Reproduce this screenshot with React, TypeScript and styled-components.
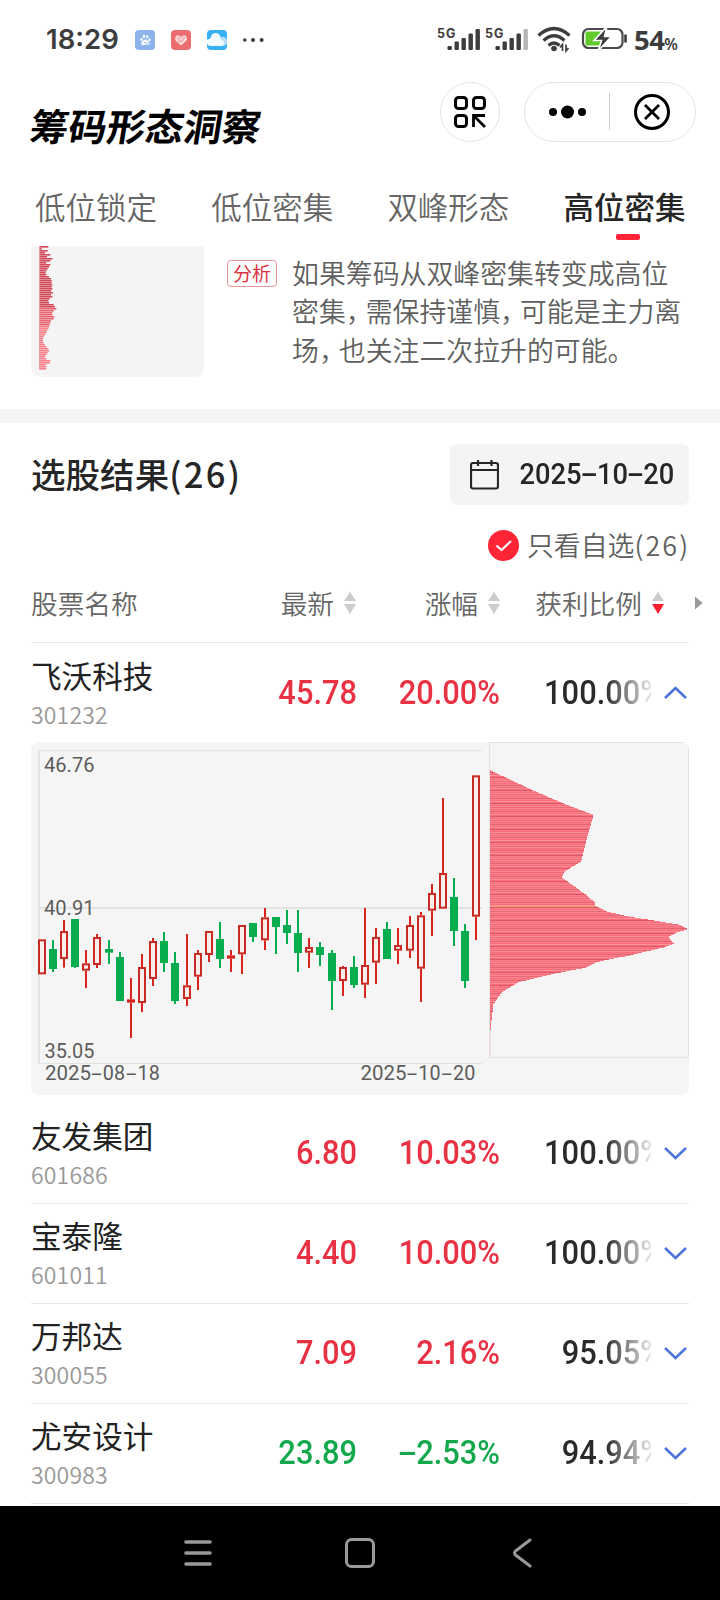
import React from 'react';
import styled, { createGlobalStyle, css } from 'styled-components';

const GlobalStyle = createGlobalStyle`
  * { box-sizing: border-box; }
  html, body { margin: 0; padding: 0; background: #fff; }
  body { font-family: "Noto Sans CJK SC", sans-serif; color: #262626; }
  svg { display: block; flex: none; }
`;

const Screen = styled.div`
  width: 720px;
  height: 1600px;
  display: flex;
  flex-direction: column;
  background: #fff;
  overflow: hidden;
  white-space: nowrap;
`;

/* ---------- status bar ---------- */
const StatusBar = styled.header`
  height: 78px;
  padding: 1px 40px 0 46px;
  display: flex;
  align-items: center;
  justify-content: space-between;
  color: #3d3d3d;
`;
const StatusGroup = styled.div`
  display: flex;
  align-items: center;
`;
const Clock = styled.span`
  width: 89px;
  font: 600 27.5px/1 Inter, sans-serif;
`;
const AppBadge = styled.span<{ $bg: string }>`
  width: 20px;
  height: 20px;
  margin-right: 16px;
  border-radius: 4px;
  background: ${(p) => p.$bg};
  overflow: hidden;
`;
const Battery = styled.span`
  width: 46px;
  margin-left: 6px;
  font: 700 27.5px/1 "Noto Sans", sans-serif;
  letter-spacing: -0.6px;
  small { font-size: 15.5px; font-weight: 600; letter-spacing: 0; }
`;

/* ---------- header ---------- */
const Header = styled.div`
  height: 68px;
  padding: 0 24px 0 31px;
  display: flex;
  align-items: flex-start;
`;
const Brand = styled.h1`
  flex: 1;
  margin: 24px 0 0;
  font-size: 38.4px;
  line-height: 44px;
  font-weight: 700;
  color: #000;
  span { display: inline-block; transform: skewX(-9deg) scaleY(0.98); }
`;
const RoundButton = styled.button`
  width: 60px;
  height: 60px;
  margin: 4px 24px 0 0;
  padding: 0;
  border: 1px solid #e4e4e4;
  border-radius: 50%;
  background: #fff;
  display: flex;
  align-items: center;
  justify-content: center;
`;
const Capsule = styled.div`
  width: 172px;
  height: 60px;
  margin-top: 4px;
  border: 1px solid #e4e4e4;
  border-radius: 30px;
  display: flex;
  align-items: center;
`;
const CapsuleHalf = styled.div`
  flex: 1;
  display: flex;
  justify-content: center;
  & + & { position: relative; }
  & + &::before {
    content: '';
    position: absolute;
    left: -1px;
    top: 0;
    width: 1px;
    height: 37px;
    background: #ccc;
  }
`;

/* ---------- tabs ---------- */
const Tabs = styled.nav`
  height: 100px;
  padding: 38px 0 0 35px;
  display: flex;
`;
const Tab = styled.div<{ $active?: boolean }>`
  flex: none;
  width: 176.2px;
  font-size: 30.5px;
  line-height: 44px;
  color: ${(p) => (p.$active ? '#262626' : '#666')};
  font-weight: ${(p) => (p.$active ? 500 : 350)};
  ${(p) => p.$active && css`
    &::after {
      content: '';
      display: block;
      width: 24px;
      height: 6px;
      margin: 6px 0 0 52px;
      border-radius: 2px;
      background: #ff2436;
    }
  `}
`;

/* ---------- analysis ---------- */
const Analysis = styled.section`
  height: 163px;
  padding-left: 31px;
  display: flex;
  align-items: flex-start;
`;
const SampleCard = styled.div`
  width: 173px;
  height: 131px;
  padding-left: 8px;
  border-radius: 0 0 9px 9px;
  background: #f4f4f4;
`;
const Tag = styled.span`
  width: 50px;
  height: 27px;
  margin: 14px 15px 0 23px;
  border: 1px solid #e3939a;
  border-radius: 4px;
  font-size: 19px;
  line-height: 23px;
  text-align: center;
  color: #d93343;
`;
const Description = styled.p`
  margin: 8px 0 0;
  font-size: 26.88px;
  line-height: 38.4px;
  font-weight: 350;
  color: #5f5f5f;
`;
const Comma = styled.span`
  letter-spacing: -7px;
`;
const Band = styled.div`
  height: 14px;
  background: #f4f4f4;
`;

/* ---------- results ---------- */
const Results = styled.main`
  flex: 1;
  padding: 21px 31px 0;
  overflow: hidden;
`;
const ResultHead = styled.div`
  display: flex;
  align-items: center;
  justify-content: space-between;
  height: 61px;
`;
const ResultTitle = styled.h2`
  margin: 0 0 4px;
  font-size: 34.56px;
  font-weight: 500;
  line-height: 50px;
  span { letter-spacing: 2.3px; }
`;
const DateBox = styled.div`
  width: 239px;
  height: 61px;
  padding: 0 15px 0 20px;
  border-radius: 7px;
  background: #f4f4f4;
  display: flex;
  align-items: center;
  justify-content: space-between;
`;
const DateText = styled.span`
  margin-top: 1px;
  font: 500 29.5px/1 Roboto, sans-serif;
  transform: scaleX(0.925);
  transform-origin: right;
`;
const Dash = styled.span`
  display: inline-block;
  width: 16.6px;
  text-align: center;
  transform: scaleX(1.9);
`;
const Filter = styled.div`
  height: 60px;
  margin-top: 9px;
  display: flex;
  align-items: center;
  justify-content: flex-end;
  gap: 8px;
  font-size: 26.88px;
  font-weight: 350;
  color: #5f5f5f;
  svg { margin-top: 2px; }
  span span { letter-spacing: 2.1px; margin-right: -1.2px; }
`;
const TableHead = styled.div`
  height: 69px;
  padding-bottom: 12px;
  border-bottom: 1px solid #e6e6e6;
  display: grid;
  grid-template-columns: 195px 130px 144px 164px 1fr;
  align-items: center;
  font-size: 26.7px;
  font-weight: 350;
  color: #666;
  svg { margin-top: 2px; }
`;
const HeadCell = styled.div<{ $first?: boolean }>`
  display: flex;
  align-items: center;
  justify-content: ${(p) => (p.$first ? 'flex-start' : 'flex-end')};
  gap: 10px;
`;
const ScrollHint = styled.div`
  margin-left: 31px;
`;
const StockRow = styled.div<{ $open?: boolean }>`
  height: ${(p) => (p.$open ? 99 : 100)}px;
  padding-top: ${(p) => (p.$open ? 3 : 0)}px;
  border-bottom: 1px solid ${(p) => (p.$open ? 'transparent' : '#e6e6e6')};
  display: grid;
  grid-template-columns: 160px 166px 143px 151px 1fr;
  align-items: center;
`;
const StockName = styled.div`
  font-size: 30.6px;
  line-height: 40px;
  font-weight: 400;
  color: #222;
`;
const StockCode = styled.div`
  font-size: 23.04px;
  line-height: 38px;
  font-weight: 350;
  letter-spacing: 0.15px;
  color: #999;
`;
const Figure = styled.div<{ $color: string }>`
  margin-bottom: 2px;
  font: 500 33.5px/40px Roboto, sans-serif;
  text-align: right;
  color: ${(p) => p.$color};
  transform: scaleX(0.92);
  transform-origin: right;
  ${Dash} { width: 18.8px; }
`;
const FadedFigure = styled(Figure)`
  overflow: hidden;
  display: flex;
  justify-content: flex-end;
  mask-image: linear-gradient(to right, #000 calc(100% - 50px), rgba(0, 0, 0, 0.1));
  span { margin-right: -13px; }
`;
const ChevronCell = styled.div<{ $open?: boolean }>`
  display: flex;
  justify-content: flex-end;
  padding: 0 2px ${(p) => (p.$open ? 2 : 0)}px 0;
`;
const ChartCard = styled.div`
  height: 353px;
  margin-bottom: 9px;
  border-radius: 8px;
  background: #f5f5f5;
  overflow: hidden;
`;

/* ---------- navigation bar ---------- */
const NavBar = styled.footer`
  height: 94px;
  background: #000;
  display: flex;
  align-items: center;
  justify-content: center;
  gap: 132px;
`;

type Candle = ['r' | 'g' | 'f', number, number, number, number];

/* kind, high, body top, body bottom, low — in thirds of a pixel from y = 735 */
const candles: Candle[] = [
  ['r', 613, 613, 718, 718], ['g', 615, 642, 702, 711], ['r', 555, 588, 672, 698], ['g', 552, 552, 696, 699],
  ['r', 645, 685, 707, 759], ['r', 597, 606, 690, 699], ['g', 615, 642, 653, 687], ['g', 651, 666, 798, 798],
  ['f', 729, 793, 803, 909], ['r', 657, 696, 804, 831], ['r', 609, 618, 732, 753], ['g', 591, 618, 684, 711],
  ['g', 651, 684, 798, 807], ['r', 597, 751, 792, 813], ['r', 645, 654, 725, 765], ['r', 588, 588, 660, 681],
  ['g', 561, 612, 672, 699], ['f', 645, 661, 671, 711], ['r', 570, 570, 658, 717], ['g', 564, 564, 606, 621],
  ['r', 519, 547, 616, 645], ['g', 546, 546, 576, 657], ['g', 525, 570, 594, 627], ['g', 525, 594, 654, 711],
  ['r', 609, 636, 653, 699], ['g', 621, 636, 660, 693], ['g', 645, 654, 738, 825], ['r', 693, 696, 738, 783],
  ['g', 663, 696, 750, 759], ['r', 519, 690, 749, 789], ['r', 579, 606, 683, 747], ['g', 561, 582, 672, 672],
  ['r', 579, 630, 647, 687], ['r', 543, 570, 647, 669], ['r', 531, 541, 701, 801], ['r', 447, 474, 527, 603],
  ['r', 189, 414, 521, 521], ['g', 429, 486, 588, 633], ['g', 567, 588, 738, 759], ['r', 121, 121, 545, 615],
];

/* chip distribution outline: width, row — in thirds of a pixel */
const profile: [number, number][] = [
  [2, 330], [40, 348], [125, 388], [175, 410], [240, 437], [310, 463], [291, 530], [272, 604], [225, 632], [214, 650],
  [250, 676], [290, 705], [314, 726], [314, 735], [350, 753], [420, 769], [480, 778], [540, 788], [570, 793],
  [594, 806], [560, 816], [534, 830], [552, 849], [520, 861], [455, 876], [415, 886], [370, 894], [320, 905],
  [285, 922], [190, 940], [85, 965], [35, 995], [10, 1030], [4, 1075], [1, 1110],
];

const profileWidth = (y: number) => {
  for (let i = 1; i < profile.length; i++) {
    const [w0, y0] = profile[i - 1];
    const [w1, y1] = profile[i];
    if (y <= y1) return w0 + ((w1 - w0) * (y - y0)) / (y1 - y0);
  }
  return 0;
};

const shades = ['#d9596a', '#fd7d88', '#fa6c79', '#f98c95', '#e96a76', '#ff8690', '#fd6c79', '#f47d87', '#de6471', '#ff7f8a', '#fb6b79', '#f9949b', '#ff6c79'];

const priceLabel = { fontFamily: 'Roboto', fontSize: 21, fill: '#5c5c5c' } as const;

function DateLabel({ x, parts }: { x: number; parts: string[] }) {
  const offsets = [0, 57.8, 92.6];
  return (
    <g {...priceLabel}>
      {parts.map((p, i) => (
        <text key={i} x={x + offsets[i]} y={337.5} textLength={i === 0 ? 46 : 22.2} lengthAdjust="spacingAndGlyphs">{p}</text>
      ))}
      {[46.3, 81].map((o) => (
        <text key={o} transform={`translate(${x + o} 337.5) scale(1.8 1)`} x={0} y={0}>-</text>
      ))}
    </g>
  );
}

function KLineChart() {
  const rows: React.ReactNode[] = [];
  for (let y = 110; y < 370; y++) {
    const w = profileWidth(y * 3) / 3;
    const fill = y === 246 ? '#f2a06a' : shades[y % shades.length];
    if (w > 0) rows.push(<rect key={y} x={459} y={y - 82} width={Math.round(w * 2) / 2} height={1} fill={fill} />);
  }
  return (
    <svg width="658" height="353">
      <g stroke="#e3e3e3" fill="none">
        <path d="M7 8.5H451M7 321.5H451" />
        <path d="M7 166H451M8 8V321" strokeWidth="2" />
        <path d="M458.5 .5H657.5V315.5H458.5Z" />
      </g>
      <g {...priceLabel}>
        <text x="13" y="29.5" textLength="50.5" lengthAdjust="spacingAndGlyphs">46.76</text>
        <text x="13" y="173" textLength="50.5" lengthAdjust="spacingAndGlyphs">40.91</text>
        <text x="13.5" y="316" textLength="50" lengthAdjust="spacingAndGlyphs">35.05</text>
      </g>
      {candles.map(([kind, h, t, b, l], i) => {
        const cx = Math.round(10.6 + i * 11.15);
        const [hi, top, bot, lo] = [h, t, b, l].map((v) => v / 3 - 7);
        const color = kind === 'g' ? '#06ad4e' : '#d8241c';
        return (
          <g key={i} fill={color}>
            <rect x={cx - 1} y={hi} width={2} height={top - hi} />
            <rect x={cx - 1} y={bot} width={2} height={lo - bot} />
            {kind === 'r' ? (
              <rect x={cx - 3} y={top + 1} width={6} height={Math.max(bot - top - 2, 1)} fill="#fbeeed" stroke="#c92a22" strokeWidth={2} />
            ) : (
              <rect x={cx - 4} y={top} width={8} height={bot - top} />
            )}
          </g>
        );
      })}
      <g shapeRendering="crispEdges">{rows}</g>
      <path d="M459 288V315" stroke="#f3cdd0" strokeWidth="1" />
      <DateLabel x={14} parts={['2025', '08', '18']} />
      <DateLabel x={329.5} parts={['2025', '10', '20']} />
    </svg>
  );
}

const sampleBars = [28, 8, 26, 18, 34, 24, 40, 34, 22, 34, 30, 26, 22, 20, 22, 30, 36, 38, 38, 40, 38, 40, 36, 42, 36, 40, 32, 28, 30, 44, 48, 52, 44, 40, 40, 46, 44, 36, 34, 32, 30, 28, 24, 22, 18, 14, 12, 12, 14, 18, 22, 28, 30, 26, 22, 18, 22, 34, 32, 20, 22, 22];

function SampleBars() {
  return (
    <svg width="60" height="131">
      {sampleBars.map((w, i) => (
        <rect key={i} x="0" y={i * 2} width={w / 3} height="1.6" fill={i < 31 ? '#d2495a' : i < 40 ? '#ea6573' : '#f77f8a'} />
      ))}
      <path d="M.5 0V123" stroke="#f29aa3" strokeWidth="1" />
    </svg>
  );
}

function SortArrows({ active }: { active?: boolean }) {
  return (
    <svg width="12" height="24" viewBox="0 0 12 24">
      <path d="M6 .8L12 10H0Z" fill="#ccc" />
      <path d="M6 23L12 13H0Z" fill={active ? '#f5222f' : '#ccc'} />
    </svg>
  );
}

function Chevron({ up }: { up?: boolean }) {
  return (
    <svg width="23" height="13" viewBox="0 0 23 13" fill="none" stroke="#4a73dc" strokeWidth="2.5">
      <path d={up ? 'M1 12L11.5 2L22 12' : 'M1 1L11.5 11L22 1'} />
    </svg>
  );
}

function Signal({ weak }: { weak?: boolean }) {
  return (
    <svg width="48" height="28" viewBox="0 -1 48 28">
      <text x="0" y="10.5" fontFamily="Inter" fontWeight="700" fontSize="12.5" textLength="18.5" fill="#3d3d3d">5G</text>
      {[4, 8.5, 12, 16.5, 21].map((h, i) => (
        <rect key={i} x={10.5 + i * 7} y={23 - h} width="4.4" height={h} rx="1" fill={weak && i === 4 ? '#b5b5b5' : '#3d3d3d'} />
      ))}
    </svg>
  );
}

function WifiBattery() {
  return (
    <svg width="95" height="28" viewBox="-4 0 95 28">
      <g fill="none" stroke="#3d3d3d" strokeWidth="3.2">
        <path d="M1.5 9.5Q17 -4.5 32.5 9.5" />
        <path d="M6.5 14.5Q17 5 27.5 14.5" />
        <path d="M11.5 19.5Q17 14.5 22.5 19.5" />
      </g>
      <circle cx="17" cy="22.5" r="2.8" fill="#3d3d3d" />
      <path d="M25.5 25V18.5L23 21.5M29 18.5V25L31.500 22" stroke="#3d3d3d" strokeWidth="1.7" fill="none" />
      <rect x="46" y="3" width="39.5" height="19" rx="5.5" fill="none" stroke="#4a4a4a" strokeWidth="2.2" />
      <path d="M50 5.5H66L60 13.5H66L63 19.5H50Q48.5 19.5 48.5 18V7Q48.5 5.5 50 5.5Z" fill="#62cb2c" />
      <path d="M70 .5L57 14.5H64.5L61 25L74.5 10.5H67.5Z" fill="#3d3d3d" stroke="#fff" strokeWidth="1.6" />
      <path d="M88.5 8.5V16.5" stroke="#3d3d3d" strokeWidth="2.6" />
    </svg>
  );
}

const stocks = [
  { name: '飞沃科技', code: '301232', price: '45.78', change: '20.00%', ratio: '100.00%', open: true },
  { name: '友发集团', code: '601686', price: '6.80', change: '10.03%', ratio: '100.00%' },
  { name: '宝泰隆', code: '601011', price: '4.40', change: '10.00%', ratio: '100.00%' },
  { name: '万邦达', code: '300055', price: '7.09', change: '2.16%', ratio: '95.05%' },
  { name: '尤安设计', code: '300983', price: '23.89', change: '-2.53%', ratio: '94.94%' },
];

export default function App() {
  return (
    <Screen>
      <GlobalStyle />
      <StatusBar>
        <StatusGroup>
          <Clock>18:29</Clock>
          <AppBadge $bg="#8db4ea">
            <svg width="20" height="20" viewBox="0 0 20 20" fill="#fff">
              <path d="M10.5 9.5C12 9.5 14.7 12 14.5 13.7C14.2 15.7 11.8 14.9 10.3 15C8.5 15.2 6.5 15.5 6.3 13.7C6.2 12 9 9.5 10.5 9.5Z" />
              <ellipse cx="6.5" cy="9.5" rx="1.2" ry="1.7" />
              <ellipse cx="9" cy="6.5" rx="1.2" ry="1.7" />
              <ellipse cx="12.2" cy="6.7" rx="1.2" ry="1.7" />
              <ellipse cx="14.5" cy="9.7" rx="1.2" ry="1.5" />
              <path d="M8.5 13.5L10.5 11.5M11 12.3V14H13V12.3" stroke="#8db4ea" strokeWidth=".8" fill="none" />
            </svg>
          </AppBadge>
          <AppBadge $bg="#ec6d70">
            <svg width="20" height="20" viewBox="0 0 20 20">
              <path d="M10 15.5L5 11Q3 8 5.5 5.8Q8 4.5 10 7Q12 4.5 14.5 5.8Q17 8 15 11Z" fill="#fbdedd" />
              <path d="M6 7.5L10 12L14 7.5M8 6.5L9 8.5M12 6.5L11 8.5M7 11L8.5 12" stroke="#ec6d70" fill="none" strokeWidth=".8" />
            </svg>
          </AppBadge>
          <AppBadge $bg="#37b0f5">
            <svg width="20" height="20" viewBox="0 0 20 20">
              <circle cx="15.5" cy="11.5" r="4.7" fill="#b5e0fb" />
              <path d="M0 9.5Q3 9 3.5 8Q4.5 3 9 3Q14 3.5 13.5 9.5Q17 10 17 13Q16.5 16 13.5 16H4Q1 16 0 14Z" fill="#f2fafe" />
            </svg>
          </AppBadge>
          <svg width="24" height="20" fill="#3d3d3d"><circle cx="1.8" cy="10" r="1.8" /><circle cx="10" cy="10" r="2" /><circle cx="18.6" cy="10" r="2" /></svg>
        </StatusGroup>
        <StatusGroup>
          <Signal />
          <Signal weak />
          <WifiBattery />
          <Battery>54<small>%</small></Battery>
        </StatusGroup>
      </StatusBar>

      <Header>
        <Brand><span>筹码形态洞察</span></Brand>
        <RoundButton>
          <svg width="34" height="34" viewBox="0 0 34 34" fill="none" stroke="#000" strokeWidth="3">
            <rect x="2.5" y="2.5" width="11" height="11" rx="3" />
            <rect x="20.5" y="2.5" width="11" height="11" rx="3" />
            <rect x="2.5" y="20.5" width="11" height="11" rx="3" />
            <path d="M20.5 32V20.5H32M21 21L32 32" strokeWidth="2.8" />
          </svg>
        </RoundButton>
        <Capsule>
          <CapsuleHalf>
            <svg width="40" height="16"><circle cx="5" cy="8" r="4" /><circle cx="19.5" cy="8" r="6.5" /><circle cx="34" cy="8" r="4" /></svg>
          </CapsuleHalf>
          <CapsuleHalf>
            <svg width="38" height="38" viewBox="0 0 38 38" fill="none" stroke="#000" strokeWidth="3">
              <circle cx="18" cy="19" r="16.5" />
              <path d="M11 12L25 26M25 12L11 26" strokeWidth="2.8" />
            </svg>
          </CapsuleHalf>
        </Capsule>
      </Header>

      <Tabs>
        <Tab>低位锁定</Tab>
        <Tab>低位密集</Tab>
        <Tab>双峰形态</Tab>
        <Tab $active>高位密集</Tab>
      </Tabs>

      <Analysis>
        <SampleCard><SampleBars /></SampleCard>
        <Tag>分析</Tag>
        <Description>
          如果筹码从双峰密集转变成高位<br />
          密集<Comma>，</Comma>需保持谨慎<Comma>，</Comma>可能是主力离<br />
          场<Comma>，</Comma>也关注二次拉升的可能。
        </Description>
      </Analysis>
      <Band />

      <Results>
        <ResultHead>
          <ResultTitle>选股结果<span>(26)</span></ResultTitle>
          <DateBox>
            <svg width="29" height="30" viewBox="0 0 29 30" fill="none" stroke="#262626" strokeWidth="2.2">
              <rect x="1" y="3" width="27" height="25.5" rx="2" />
              <path d="M1 10H28M8 0V6M21.5 0V6" />
            </svg>
            <DateText>2025<Dash>-</Dash>10<Dash>-</Dash>20</DateText>
          </DateBox>
        </ResultHead>
        <Filter>
          <svg width="31" height="31" viewBox="0 0 31 31">
            <circle cx="15.5" cy="15.5" r="15.5" fill="#ff2436" />
            <path d="M8.5 15.5L13.5 20L23 11" fill="none" stroke="#fff" strokeWidth="2.2" />
          </svg>
          <span>只看自选<span>(26)</span></span>
        </Filter>
        <TableHead>
          <HeadCell $first>股票名称</HeadCell>
          <HeadCell>最新<SortArrows /></HeadCell>
          <HeadCell>涨幅<SortArrows /></HeadCell>
          <HeadCell>获利比例<SortArrows active /></HeadCell>
          <ScrollHint><svg width="8" height="14"><path d="M0 .5L7.5 7L0 13.5Z" fill="#999" /></svg></ScrollHint>
        </TableHead>
        {stocks.map((s) => {
          const falling = s.change.startsWith('-');
          const color = falling ? '#12a84b' : '#e83142';
          return (
            <React.Fragment key={s.code}>
              <StockRow $open={s.open}>
                <div>
                  <StockName>{s.name}</StockName>
                  <StockCode>{s.code}</StockCode>
                </div>
                <Figure $color={color}>{s.price}</Figure>
                <Figure $color={color}>{falling && <Dash>-</Dash>}{s.change.replace('-', '')}</Figure>
                <FadedFigure $color="#2a2a2a"><span>{s.ratio}</span></FadedFigure>
                <ChevronCell $open={s.open}><Chevron up={s.open} /></ChevronCell>
              </StockRow>
              {s.open && <ChartCard><KLineChart /></ChartCard>}
            </React.Fragment>
          );
        })}
      </Results>

      <NavBar>
        <svg width="28" height="28" viewBox="0 0 28 28" stroke="#999" strokeWidth="3.6" strokeLinecap="round"><path d="M2 3H26M2 14H26M2 25H26" /></svg>
        <svg width="32" height="32" viewBox="0 0 32 32" fill="none" stroke="#999" strokeWidth="3"><rect x="2.5" y="2.5" width="27" height="27" rx="5" /></svg>
        <svg width="28" height="30" viewBox="0 0 28 30" fill="none" stroke="#999" strokeWidth="3" strokeLinecap="round" strokeLinejoin="round"><path d="M22 2L7.500 13Q5.5 15 7.5 17L22 28" /></svg>
      </NavBar>
    </Screen>
  );
}
